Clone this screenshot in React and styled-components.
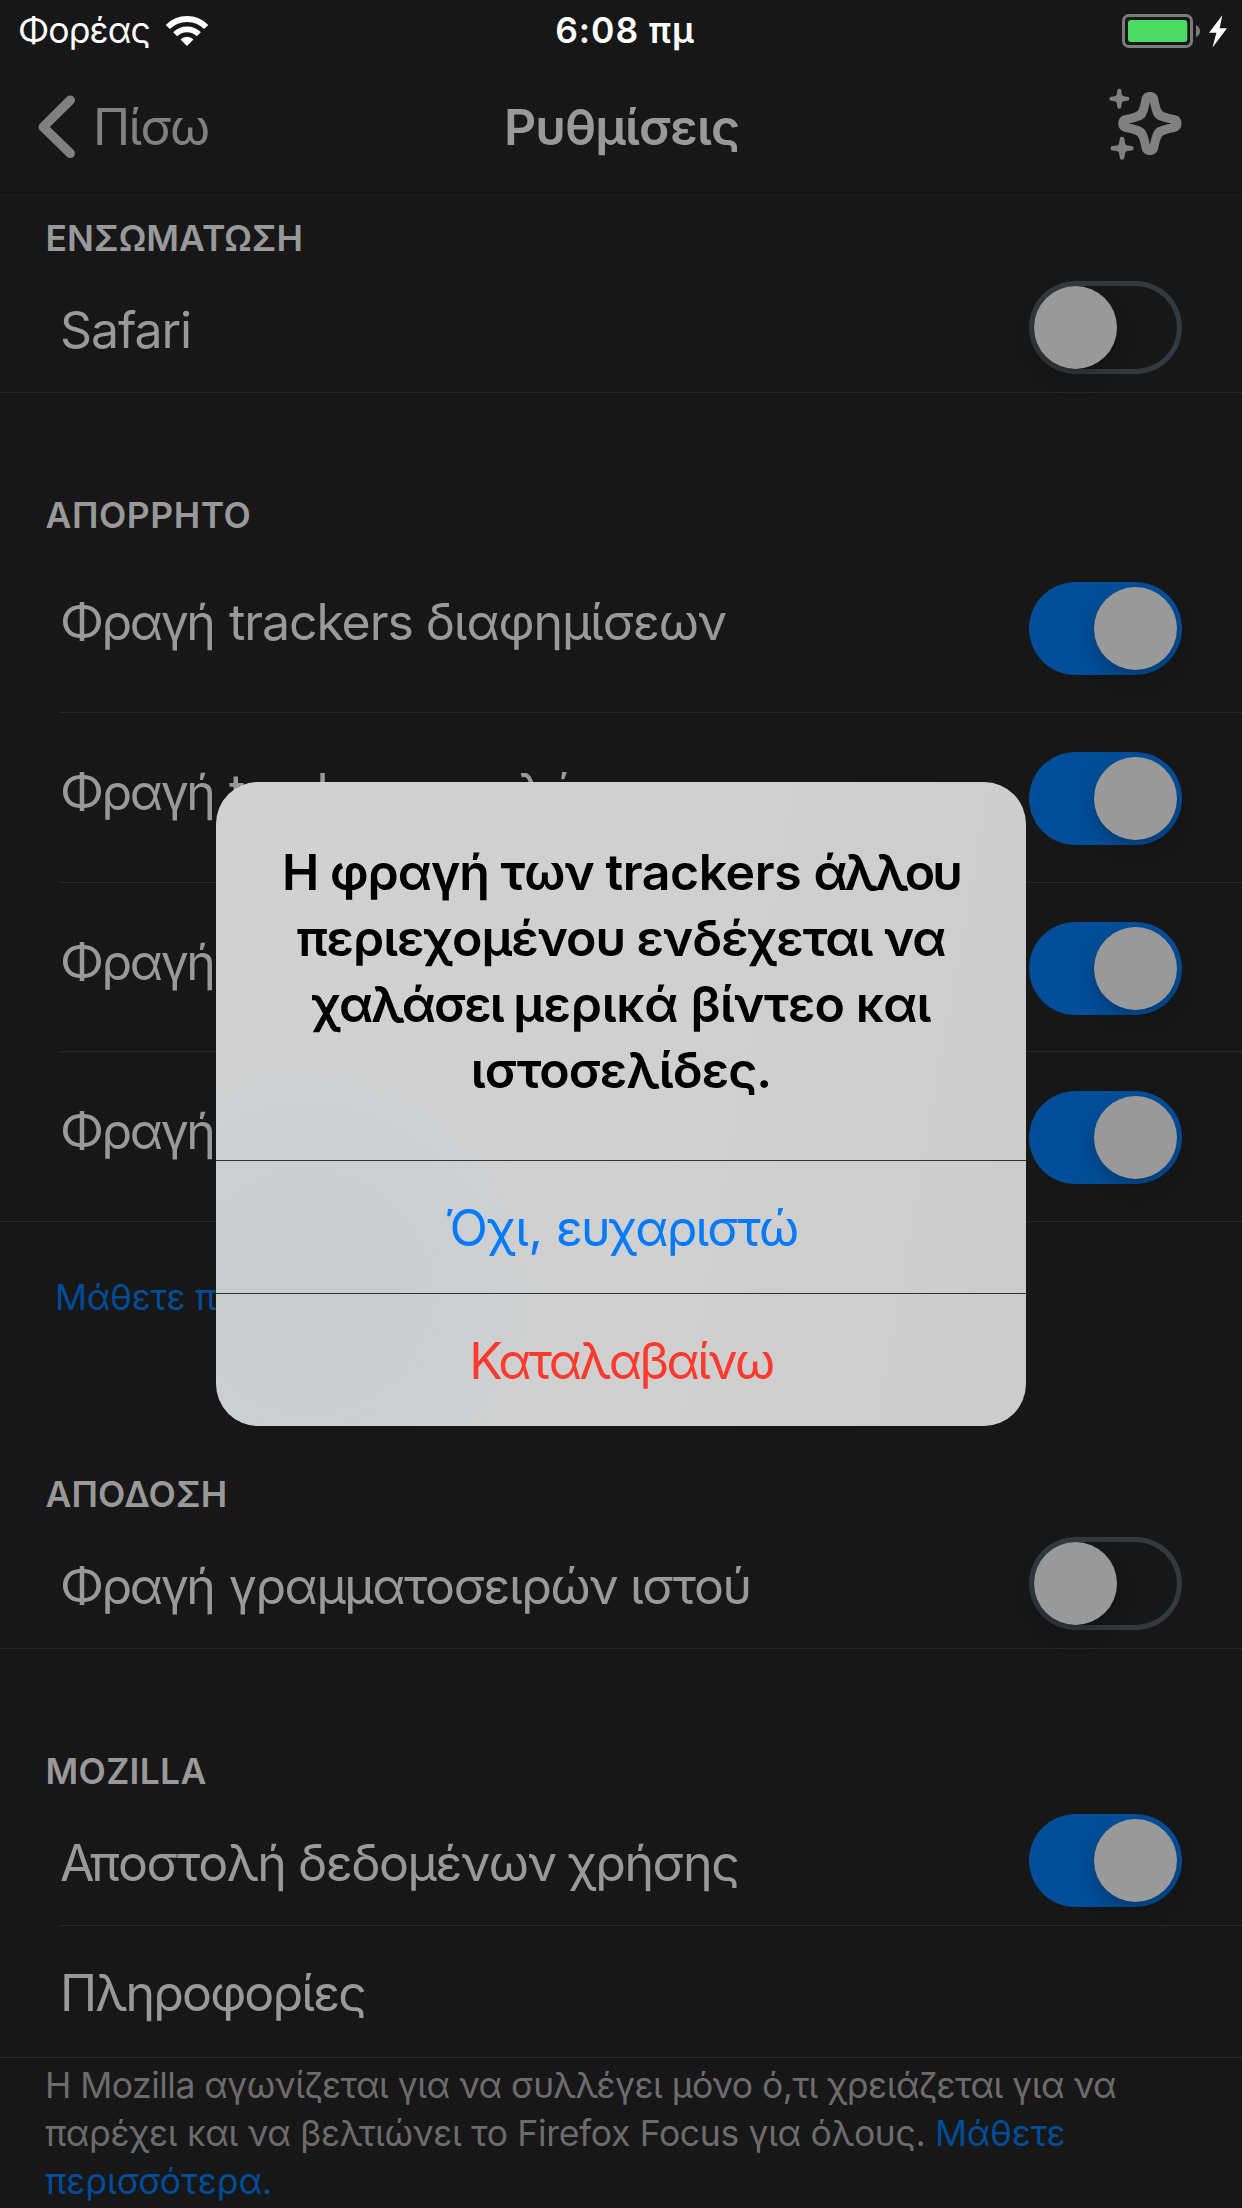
import React from "react";
import styled, { createGlobalStyle } from "styled-components";

const GlobalStyle = createGlobalStyle`
  * { box-sizing: border-box; }
  body { margin: 0; background: #171717; }
`;

const Screen = styled.div`
  position: relative;
  width: 1242px;
  height: 2208px;
  overflow: hidden;
  display: flex;
  flex-direction: column;
  background: #171717;
  color: #999999;
  font-family: Inter, "Liberation Sans", sans-serif;
  font-size: 50px;
  white-space: nowrap;
`;

const StatusBar = styled.header`
  flex: none;
  height: 60px;
  display: grid;
  grid-template-columns: 1fr auto 1fr;
  align-items: center;
  padding: 0 14px 0 18px;
  color: #ffffff;
  font-size: 35.5px;
  line-height: 62px;
`;

const Carrier = styled.div`
  display: flex;
  align-items: center;
  gap: 15px;
`;

const Text = styled.span`
  letter-spacing: ${(p) => p.$track || 0}px;
`;

const Lead = styled.span`
  margin-right: 2.5px;
  letter-spacing: -2.4px;
`;

const Clock = styled.div`
  padding-left: 4px;
  font-weight: 600;
  letter-spacing: 0.9px;
`;

const Power = styled.div`
  display: flex;
  justify-content: flex-end;
`;

const NavBar = styled.nav`
  flex: none;
  height: 133px;
  display: grid;
  grid-template-columns: 1fr auto 1fr;
  align-items: center;
  padding: 1px 38px 0;
  border-bottom: 1px solid #101010;
`;

const Back = styled.div`
  display: flex;
  align-items: center;
  gap: 17px;
  color: #808080;
`;

const Title = styled.h1`
  margin: 0;
  padding-left: 1px;
  font-size: 50px;
  font-weight: 600;
  letter-spacing: ${(p) => p.$track}px;
`;

const NavAction = styled.div`
  display: flex;
  justify-content: flex-end;
  padding: 0 22px 4px 0;
`;

const SectionHeader = styled.h2`
  flex: none;
  height: ${(p) => p.$height}px;
  margin: 0;
  padding: 0 45.5px ${(p) => p.$bottom || 1}px;
  display: flex;
  align-items: flex-end;
  font-size: 35.5px;
  line-height: 40px;
  font-weight: 600;
`;

const Row = styled.div`
  flex: none;
  height: ${(p) => p.$height}px;
  margin-left: ${(p) => (p.$inset ? 60 : 0)}px;
  padding: 0 60px 0 ${(p) => (p.$inset ? 0 : 60)}px;
  display: flex;
  align-items: center;
  justify-content: space-between;
  border-bottom: 1px solid #272727;
`;

const labelPadding = {
  raised: "0 0 11px",
  lowered: "8px 0 0",
  centered: "3px 0 0",
};

const Label = styled.span`
  line-height: 60px;
  padding: ${(p) => labelPadding[p.$place || "lowered"]};
  letter-spacing: ${(p) => p.$track || 0}px;
`;

const Track = styled.span`
  width: 153px;
  height: 93px;
  margin-top: ${(p) => p.$top}px;
  padding: 5px;
  display: flex;
  justify-content: ${(p) => (p.$on ? "flex-end" : "flex-start")};
  border-radius: 47px;
  background: ${(p) => (p.$on ? "#004e99" : "transparent")};
  box-shadow: ${(p) => (p.$on ? "none" : "inset 0 0 0 5px #34393d")};
`;

const Thumb = styled.span`
  width: 83px;
  height: 83px;
  border-radius: 50%;
  background: #999999;
  box-shadow: 0 9px 22px rgba(0, 0, 0, 0.2), 0 4px 4px rgba(0, 0, 0, 0.06);
`;

const LearnMore = styled.div`
  flex: none;
  height: 150px;
  padding-left: 55px;
  color: #004c97;
  font-size: 35.5px;
  line-height: 152px;
`;

const Footer = styled.p`
  margin: 0;
  padding: 4px 45px 0;
  display: flex;
  flex-direction: column;
  color: #6c6c6c;
  font-size: 35.5px;
  line-height: 48px;
`;

const Link = styled.span`
  color: #004c97;
`;

const Alert = styled.div`
  position: absolute;
  left: 216px;
  top: 782px;
  width: 810px;
  height: 644px;
  display: flex;
  flex-direction: column;
  overflow: hidden;
  border-radius: 42px;
  background: radial-gradient(circle at 90px 510px, #c9cdd0 0, #cacdd0 90px, rgba(205, 206, 206, 0) 250px),
    linear-gradient(100deg, #d1d1d1 0%, #d0d0d0 55%, #cccccc 100%);
`;

const Message = styled.div`
  flex: none;
  height: 378px;
  padding-top: 57px;
  display: flex;
  flex-direction: column;
  align-items: center;
  color: #000000;
  font-weight: 600;
  line-height: 66px;
`;

const MessageLine = styled.div`
  white-space: pre;
`;

const AlertButton = styled.div`
  flex: none;
  height: 133px;
  border-top: 1px solid #2e3032;
  text-align: center;
  line-height: 134px;
  color: ${(p) => p.$color};
  letter-spacing: ${(p) => p.$track}px;
`;

function Toggle({ on, top = 3 }) {
  return (
    <Track $on={on} $top={top}>
      <Thumb />
    </Track>
  );
}

function WifiIcon() {
  return (
    <svg width="44" height="32" viewBox="-22 -31 44 32" fill="none" stroke="#fff">
      <path d="M-19.2 -19A27 27 0 0 1 19.2 -19" strokeWidth="5.8" />
      <path d="M-11.8 -11.8A16.7 16.7 0 0 1 11.8 -11.8" strokeWidth="5.8" />
      <path d="M0 0L-6.5 -6.6A9.2 9.2 0 0 1 6.5 -6.6Z" fill="#fff" stroke="none" />
    </svg>
  );
}

function BatteryIcon() {
  return (
    <svg width="106" height="34" viewBox="0 0 106 34">
      <rect x="1.5" y="1.5" width="68" height="31" rx="5.5" fill="none" stroke="#7c7c7c" strokeWidth="3" />
      <rect x="6" y="6" width="59.3" height="22" rx="3.2" fill="#4cd964" />
      <path d="M74 11Q78 13 78 17T74 23Z" fill="#7c7c7c" />
      <path d="M100.3 1.3L87 18.8H94.4L90.5 33.5L105 14.2H97.7Z" fill="#fff" />
    </svg>
  );
}

function ChevronIcon() {
  return (
    <svg width="38" height="64" viewBox="0 0 38 64" fill="none" stroke="#808080" strokeWidth="9.4" strokeLinecap="round" strokeLinejoin="round">
      <path d="M32.3 5.2L5.2 32L32.3 58.4" />
    </svg>
  );
}

const SMALL_STAR =
  "M-2.1 -8.4A2.1 2.1 0 0 1 2.1 -8.4C2.4 -6 2.6 -4.2 3.3 -3.3C4.2 -2.6 6 -2.4 8.4 -2.1A2.1 2.1 0 0 1 8.4 2.1C6 2.4 4.2 2.6 3.3 3.3C2.6 4.2 2.4 6 2.1 8.4A2.1 2.1 0 0 1 -2.1 8.4C-2.4 6 -2.6 4.2 -3.3 3.3C-4.2 2.6 -6 2.4 -8.4 2.1A2.1 2.1 0 0 1 -8.4 -2.1C-6 -2.4 -4.2 -2.6 -3.3 -3.3C-2.6 -4.2 -2.4 -6 -2.1 -8.4Z";

function SparkleIcon() {
  return (
    <svg width="73" height="73" viewBox="1109.5 88 73 73" fill="#808080">
      <path
        transform="translate(1150.4 123.5)"
        fillRule="evenodd"
        d="M-8.4 -24.6C-7.6 -29 -4.4 -31.6 0 -31.6S7.6 -29 8.4 -24.6C9.4 -19 10.6 -14.4 12.4 -12.4C14.4 -10.6 19 -9.4 24.6 -8.4C29 -7.6 31.6 -4.4 31.6 0S29 7.6 24.6 8.4C19 9.4 14.4 10.6 12.4 12.4C10.6 14.4 9.4 19 8.4 24.6C7.6 29 4.4 31.6 0 31.6S-7.6 29 -8.4 24.6C-9.4 19 -10.6 14.4 -12.4 12.4C-14.4 10.6 -19 9.4 -24.6 8.4C-29 7.6 -31.6 4.4 -31.6 0S-29 -7.6 -24.6 -8.4C-19 -9.4 -14.4 -10.6 -12.4 -12.4C-10.6 -14.4 -9.4 -19 -8.4 -24.6ZM0 -21.6C-1.6 -13 -3.4 -8 -5.7 -5.7C-8 -3.4 -13 -1.6 -21.6 0C-13 1.6 -8 3.4 -5.7 5.7C-3.4 8 -1.6 13 0 21.6C1.6 13 3.4 8 5.7 5.7C8 3.4 13 1.6 21.6 0C13 -1.6 8 -3.4 5.7 -5.7C3.4 -8 1.6 -13 0 -21.6Z"
      />
      <path transform="translate(1119.8 98.7) scale(0.95)" d={SMALL_STAR} />
      <path transform="translate(1122.6 148.3) scale(1.1)" d={SMALL_STAR} />
    </svg>
  );
}

const trackers = [
  { rest: " trackers διαφημίσεων", height: 170, top: 2 },
  { rest: " trackers αναλύσεων", height: 170, top: 2 },
  { rest: "", height: 169, top: 3 },
  { rest: "", height: 170, top: 2 },
];

/* Each line is a list of [text, letter spacing] runs. */
const message = [
  [["Η φραγή των ", -1], ["trackers ", -0.4], ["άλλου", -3]],
  [["περιεχομένου ενδέχεται να", -1.03]],
  [["χαλάσει ", -2], ["μερικά ", -0.3], ["βίντεο και", -0.9]],
  [["ιστοσελίδες.", -1]],
];

export default function App() {
  return (
    <>
      <GlobalStyle />
      <Screen>
        <StatusBar>
          <Carrier>
            <Text $track={-0.9}>Φορέας</Text>
            <WifiIcon />
          </Carrier>
          <Clock>6:08 πμ</Clock>
          <Power>
            <BatteryIcon />
          </Power>
        </StatusBar>
        <NavBar>
          <Back>
            <ChevronIcon />
            <Text $track={-1.7}>Πίσω</Text>
          </Back>
          <Title $track={-0.9}>Ρυθμίσεις</Title>
          <NavAction>
            <SparkleIcon />
          </NavAction>
        </NavBar>

        <SectionHeader $height={67}>
          <Text $track={0.05}>ΕΝΣΩΜΑΤΩΣΗ</Text>
        </SectionHeader>
        <Row $height={133}>
          <Label $track={-1.1}>Safari</Label>
          <Toggle />
        </Row>

        <SectionHeader $height={150} $bottom={7}>
          <Text $track={0.55}>ΑΠΟΡΡΗΤΟ</Text>
        </SectionHeader>
        {trackers.map((t, i) => (
          <Row key={i} $height={t.height} $inset={i < trackers.length - 1}>
            <Label $place="raised" $track={-1.1}>
              <Lead>Φραγή</Lead>
              {t.rest}
            </Label>
            <Toggle on top={t.top} />
          </Row>
        ))}
        <LearnMore>
          <Text $track={-0.35}>Μάθετε περισσότερα.</Text>
        </LearnMore>

        <SectionHeader $height={144}>
          <Text $track={0.15}>ΑΠΟΔΟΣΗ</Text>
        </SectionHeader>
        <Row $height={133}>
          <Label $track={-1.4}>
            <Lead>Φραγή</Lead> γραμματοσειρών ιστού
          </Label>
          <Toggle />
        </Row>

        <SectionHeader $height={144}>
          <Text $track={0.3}>MOZILLA</Text>
        </SectionHeader>
        <Row $height={133} $inset>
          <Label $track={-1.43}>Αποστολή δεδομένων χρήσης</Label>
          <Toggle on />
        </Row>
        <Row $height={132}>
          <Label $place="centered" $track={-1.85}>
            Πληροφορίες
          </Label>
        </Row>
        <Footer>
          <Text $track={-0.52}>Η Mozilla αγωνίζεται για να συλλέγει μόνο ό,τι χρειάζεται για να</Text>
          <Text $track={-0.33}>
            παρέχει και να βελτιώνει το Firefox Focus για όλους. <Link>Μάθετε</Link>
          </Text>
          <Link>περισσότερα.</Link>
        </Footer>

        <Alert>
          <Message>
            {message.map((runs, i) => (
              <MessageLine key={i}>
                {runs.map(([text, track]) => (
                  <Text key={text} $track={track}>
                    {text}
                  </Text>
                ))}
              </MessageLine>
            ))}
          </Message>
          <AlertButton $color="#007aff" $track={-1.85}>
            <Text $track={-0.5}>Όχι, </Text>ευχαριστώ
          </AlertButton>
          <AlertButton $color="#ff3b30" $track={-2.6}>
            Καταλαβαίνω
          </AlertButton>
        </Alert>
      </Screen>
    </>
  );
}
